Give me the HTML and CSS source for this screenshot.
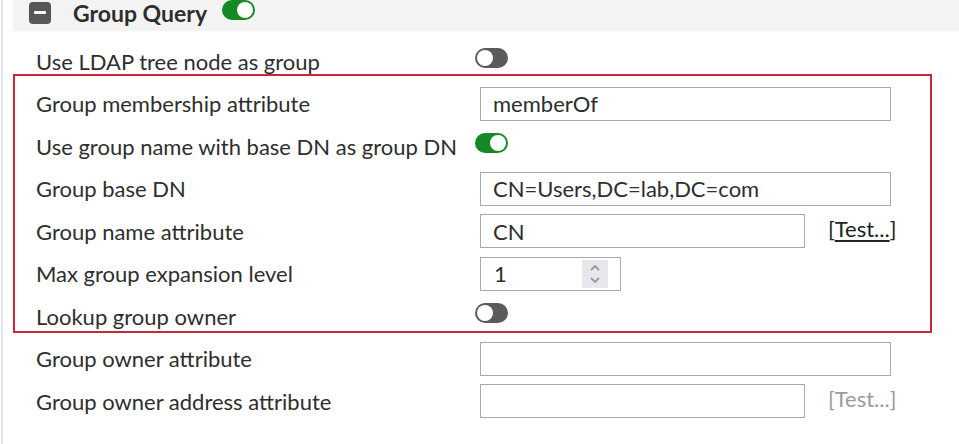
FILE: index.html
```html
<!DOCTYPE html>
<html lang="en">
<head>
    <meta charset="UTF-8">
    <meta name="viewport" content="width=device-width, initial-scale=1.0">
    <title>Group Query</title>
    <link rel="stylesheet" href="styles.css">
</head>
<body>
    <div class="panel">
        <div class="section-header">
            <span class="collapse-icon"><span class="bar"></span></span>
            <h2>Group Query</h2>
            <span class="toggle on"></span>
        </div>

        <div class="form">
            <div class="row">
                <label>Use LDAP tree node as group</label>
                <span class="toggle"></span>
            </div>

            <div class="highlight">
                <div class="row">
                    <label for="member-attr">Group membership attribute</label>
                    <input type="text" id="member-attr" class="text-input" value="memberOf">
                </div>
                <div class="row">
                    <label>Use group name with base DN as group DN</label>
                    <span class="toggle on"></span>
                </div>
                <div class="row">
                    <label for="base-dn">Group base DN</label>
                    <input type="text" id="base-dn" class="text-input" value="CN=Users,DC=lab,DC=com">
                </div>
                <div class="row">
                    <label for="name-attr">Group name attribute</label>
                    <input type="text" id="name-attr" class="text-input short" value="CN">
                    <a class="test-link"><span class="br">[</span>Test...<span class="br">]</span></a>
                </div>
                <div class="row">
                    <label for="max-level">Max group expansion level</label>
                    <div class="number-box">
                        <input type="text" id="max-level" value="1">
                        <span class="spinner">
                            <svg width="12" height="22" viewBox="0 0 12 22">
                                <polyline points="2,7 6,3 10,7" />
                                <polyline points="2,15 6,19 10,15" />
                            </svg>
                        </span>
                    </div>
                </div>
                <div class="row">
                    <label>Lookup group owner</label>
                    <span class="toggle"></span>
                </div>
            </div>

            <div class="row">
                <label for="owner-attr">Group owner attribute</label>
                <input type="text" id="owner-attr" class="text-input">
            </div>
            <div class="row">
                <label for="owner-addr">Group owner address attribute</label>
                <input type="text" id="owner-addr" class="text-input short">
                <a class="test-link disabled">[Test...]</a>
            </div>
        </div>
    </div>
</body>
</html>
```

FILE: styles.css
```css
* {
    margin: 0;
    padding: 0;
    box-sizing: border-box;
    font-family: 'Lato', sans-serif;
}

body {
    background: #fff;
    color: #2e2e2e;
    width: 959px;
    height: 444px;
    overflow: hidden;
}

.panel {
    margin-left: 1px;
    border-left: 2px solid #e3e5ec;
    min-height: 444px;
}

.section-header {
    display: flex;
    align-items: center;
    height: 31px;
    margin-left: 10px;
    padding-left: 16px;
    background: #f3f3f3;
}

.collapse-icon {
    width: 22px;
    height: 22px;
    margin-top: -6px;
    border-radius: 4px;
    background: #575757;
    display: flex;
    align-items: center;
    justify-content: center;
}

.collapse-icon .bar {
    width: 12px;
    height: 3px;
    background: #fff;
    border-radius: 1px;
}

.section-header h2 {
    font-size: 23px;
    font-weight: 700;
    color: #2e2e2e;
    margin-left: 22px;
    margin-top: -5px;
}

.section-header .toggle {
    margin-left: 15px;
    margin-top: -12px;
}

.form {
    padding-top: 9px;
}

.row {
    display: flex;
    align-items: center;
    height: 42.5px;
    padding-left: 33px;
}

.row label {
    width: 444px;
    flex-shrink: 0;
    font-size: 22px;
    color: #2e2e2e;
}

.toggle {
    position: relative;
    display: inline-block;
    width: 33px;
    height: 20px;
    border-radius: 10px;
    background: #5b5b5b;
    margin-left: -5px;
    margin-top: -6px;
}

.toggle::after {
    content: '';
    position: absolute;
    top: 2px;
    left: 2px;
    width: 16px;
    height: 16px;
    border-radius: 50%;
    background: #fff;
}

.toggle.on {
    background: #138a26;
}

.toggle.on::after {
    left: 15px;
}

.text-input {
    width: 411px;
    height: 34px;
    border: 1px solid #a9a9a9;
    padding: 0 12px;
    font-size: 22px;
    color: #2e2e2e;
    outline: none;
    background: #fff;
}

.text-input.short {
    width: 325px;
}

.test-link {
    margin-left: 23px;
    margin-top: -6px;
    font-size: 22px;
    color: #222;
    text-decoration: underline;
    text-underline-offset: 3px;
}

.test-link .br {
    display: inline-block;
    text-decoration: none;
}

.test-link.disabled {
    color: #9b9b9b;
    text-decoration: none;
}

.number-box {
    display: flex;
    align-items: center;
    width: 141px;
    height: 34px;
    border: 1px solid #a9a9a9;
    padding-left: 13px;
    padding-right: 12px;
}

.number-box input {
    width: 88px;
    border: none;
    outline: none;
    font-size: 22px;
    color: #2e2e2e;
}

.spinner {
    width: 27px;
    height: 28px;
    background: #e8e8ec;
    display: flex;
    align-items: center;
    justify-content: center;
}

.spinner polyline {
    fill: none;
    stroke: #999;
    stroke-width: 1.8;
}

.highlight {
    position: relative;
}

.highlight::after {
    content: '';
    position: absolute;
    top: -9px;
    left: 10px;
    right: 27px;
    bottom: 5px;
    border: 2px solid #c8283a;
    pointer-events: none;
}
```
